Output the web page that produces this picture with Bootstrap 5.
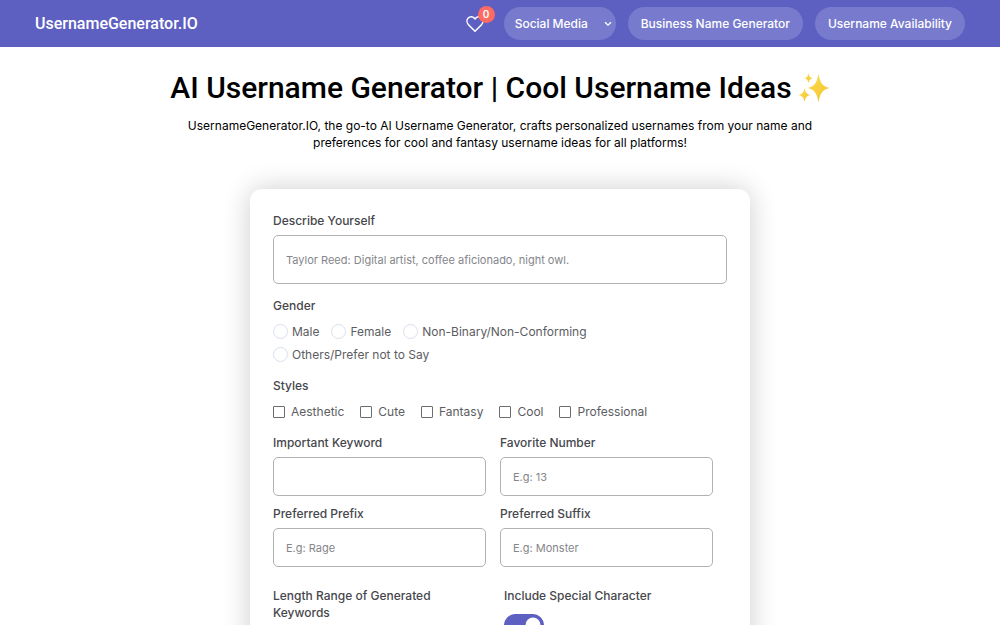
<!DOCTYPE html>
<html lang="en">
<head>
<meta charset="utf-8">
<meta name="viewport" content="width=device-width, initial-scale=1">
<title>AI Username Generator</title>
<link href="https://cdn.jsdelivr.net/npm/bootstrap@5.3.0/dist/css/bootstrap.min.css" rel="stylesheet">
<style>
  :root { --brand: #5d60c1; --brand-soft: #787bcd; --ink: #46474d; }
  body { font-family: "Inter", "Liberation Sans", sans-serif; font-size: 12px; line-height: 17px; color: var(--ink); background: #fff; }

  .site-nav { background: var(--brand); padding: 7px 35px; }
  .site-nav .navbar-brand { font-family: "Roboto", sans-serif; font-size: 16px; font-weight: 500; line-height: 20px; color: #fff; }
  .pill, .pill:hover { height: 33px; border: 0; border-radius: 17px; background-color: var(--brand-soft); color: #fff; font-size: 12px; font-weight: 500; line-height: 17px; padding: 8px 13px; }
  select.pill { width: 112px; padding: 8px 11px; background-image: url("data:image/svg+xml,%3Csvg xmlns='http://www.w3.org/2000/svg' viewBox='0 0 10 10'%3E%3Cpath d='M2 3.2l3 3 3-3' fill='none' stroke='%23fff' stroke-width='1.3'/%3E%3C/svg%3E"); background-size: 10px 10px; background-position: right 3px center; }
  .nav-tools { gap: 12px; }
  .fav { width: 18px; height: 18px; margin-right: 8px; }
  .fav-count { width: 17px; height: 17px; top: -9px; left: 12px; border-radius: 50%; background: #ff6a62; color: #fff; font-size: 10px; font-weight: 600; line-height: 17px; text-align: center; }

  .hero { padding-top: 24px; color: #000; }
  .hero h1 { font-family: "Roboto", sans-serif; font-size: 30px; font-weight: 500; line-height: 34px; gap: 6px; margin-bottom: 12px; }
  .hero p { max-width: 640px; margin-bottom: 38px; }

  .gen-card { border: 0; border-radius: 12px; padding: 23px; box-shadow: 0 0 28px rgba(0, 0, 0, .2); }
  .field-label { display: block; font-size: 12px; font-weight: 500; line-height: 17px; margin-bottom: 6px; }
  .form-control { border: 1px solid #b2b2b5; border-radius: 5px; height: 39px; padding: 8px 12px; font-size: 11px; color: var(--ink); }
  .form-control::placeholder { color: #85868a; }
  .form-control.tall { height: 49px; }
  .choices { margin: 13px 0 14px; }
  .choices + .choices { margin-top: 0; }
  .choices .field-label { margin-bottom: 9px; }
  .opt { line-height: 17px; color: #5c5d62; }
  .opt input { appearance: none; margin: 0; background: #fff; }
  .opt input[type=radio] { width: 15px; height: 15px; border: 1px solid #d9e0ea; border-radius: 50%; margin-right: 4px; }
  .opt input[type=checkbox] { width: 12px; height: 12px; border: 1px solid #6c6d73; border-radius: 1px; margin-right: 6px; }
  .opt input[type=radio]:checked { border: 4px solid var(--brand); }
  .opt input[type=checkbox]:checked { background: var(--brand); }
  .radios { gap: 6px 12px; }
  .checks { gap: 6px 16px; }
  .pair-col { padding-right: 14px; }
  .pairs { row-gap: 9px; }
  .extras { margin-top: 20px; }
  .extras .field-label { margin-bottom: 10px; }
  .form-switch { padding: 0; min-height: 0; }
  .form-switch .form-check-input { width: 40px; height: 22px; margin: 0; border-color: var(--brand); }
  .form-switch .form-check-input:checked { background-color: var(--brand); }
</style>
</head>
<body>
<nav class="navbar site-nav">
  <div class="d-flex w-100 align-items-center justify-content-between">
    <a class="navbar-brand p-0 m-0" href="#">UsernameGenerator.IO</a>
    <div class="d-flex align-items-center nav-tools">
      <a class="fav position-relative d-block" href="#" aria-label="Favorites">
        <svg class="d-block" width="18" height="18" viewBox="0 0 18 18" fill="none" stroke="#fff" stroke-width="1.5" stroke-linejoin="round"><path d="M9 16.2 2.5 9.7C.6 7.8.5 4.8 2.2 3c1.800-1.800 4.600-1.700 6.200.2L9 3.900l.6-.7c1.600-1.900 4.400-2 6.200-.2 1.700 1.800 1.600 4.800-.3 6.700z"/></svg>
        <span class="fav-count position-absolute">0</span>
      </a>
      <select class="form-select pill" aria-label="Social Media"><option>Social Media</option></select>
      <a class="btn pill" href="#">Business Name Generator</a>
      <a class="btn pill" href="#">Username Availability</a>
    </div>
  </div>
</nav>

<main class="container-fluid">
  <header class="hero text-center">
    <h1 class="d-flex justify-content-center align-items-center"><span>AI Username Generator | Cool Username Ideas</span>
      <svg width="32" height="32" viewBox="0 0 32 32" aria-hidden="true">
        <defs><linearGradient id="gold" x1="0" y1="0" x2="1" y2="1"><stop offset="0" stop-color="#ffdf55"/><stop offset="1" stop-color="#f0c02c"/></linearGradient></defs>
        <g fill="url(#gold)">
          <path d="M20.500 1.500c1.500 9 3.500 12.500 11 14.500-7.500 2-9.500 5.500-11 14.500-1.500-9-3.500-12.500-11-14.500 7.500-2 9.500-5.500 11-14.500z"/>
          <path d="M6.500 16c.9 4.500 2.200 6.200 6 7-3.800.8-5.100 2.500-6 7-.9-4.500-2.200-6.200-6-7 3.800-.8 5.100-2.500 6-7z"/>
          <path d="M10.500 1c.6 3.400 1.500 4.700 4.500 5.300-3 .6-3.900 1.900-4.500 5.300C9.900 8.200 9 6.900 6 6.300 9 5.700 9.900 4.400 10.500 1z"/>
        </g>
      </svg>
    </h1>
    <p class="mx-auto">UsernameGenerator.IO, the go-to AI Username Generator, crafts personalized usernames from your name and preferences for cool and fantasy username ideas for all platforms!</p>
  </header>

  <div class="row justify-content-center">
    <div class="col-6 p-0 w-50">
      <form class="card gen-card">
        <label class="field-label" for="about">Describe Yourself</label>
        <input class="form-control tall" id="about" type="text" placeholder="Taylor Reed: Digital artist, coffee aficionado, night owl.">

        <fieldset class="choices">
          <legend class="field-label">Gender</legend>
          <div class="d-flex flex-wrap radios">
            <label class="opt d-flex align-items-center"><input type="radio" name="gender">Male</label>
            <label class="opt d-flex align-items-center"><input type="radio" name="gender">Female</label>
            <label class="opt d-flex align-items-center"><input type="radio" name="gender">Non-Binary/Non-Conforming</label>
            <label class="opt d-flex align-items-center"><input type="radio" name="gender">Others/Prefer not to Say</label>
          </div>
        </fieldset>

        <fieldset class="choices">
          <legend class="field-label">Styles</legend>
          <div class="d-flex flex-wrap checks">
            <label class="opt d-flex align-items-center"><input type="checkbox">Aesthetic</label>
            <label class="opt d-flex align-items-center"><input type="checkbox">Cute</label>
            <label class="opt d-flex align-items-center"><input type="checkbox">Fantasy</label>
            <label class="opt d-flex align-items-center"><input type="checkbox">Cool</label>
            <label class="opt d-flex align-items-center"><input type="checkbox">Professional</label>
          </div>
        </fieldset>

        <div class="row g-0 pairs">
          <div class="col-6 pair-col"><label class="field-label" for="keyword">Important Keyword</label><input class="form-control" id="keyword" type="text"></div>
          <div class="col-6 pair-col"><label class="field-label" for="number">Favorite Number</label><input class="form-control" id="number" type="text" placeholder="E.g: 13"></div>
          <div class="col-6 pair-col"><label class="field-label" for="prefix">Preferred Prefix</label><input class="form-control" id="prefix" type="text" placeholder="E.g: Rage"></div>
          <div class="col-6 pair-col"><label class="field-label" for="suffix">Preferred Suffix</label><input class="form-control" id="suffix" type="text" placeholder="E.g: Monster"></div>
        </div>

        <div class="d-flex extras">
          <div class="w-50 pe-5"><span class="field-label">Length Range of Generated Keywords</span></div>
          <div class="ps-1">
            <label class="field-label" for="special">Include Special Character</label>
            <div class="form-check form-switch"><input class="form-check-input" id="special" type="checkbox" role="switch" checked></div>
          </div>
        </div>
      </form>
    </div>
  </div>
</main>
<script src="https://cdn.jsdelivr.net/npm/bootstrap@5.3.0/dist/js/bootstrap.bundle.min.js"></script>
</body>
</html>
